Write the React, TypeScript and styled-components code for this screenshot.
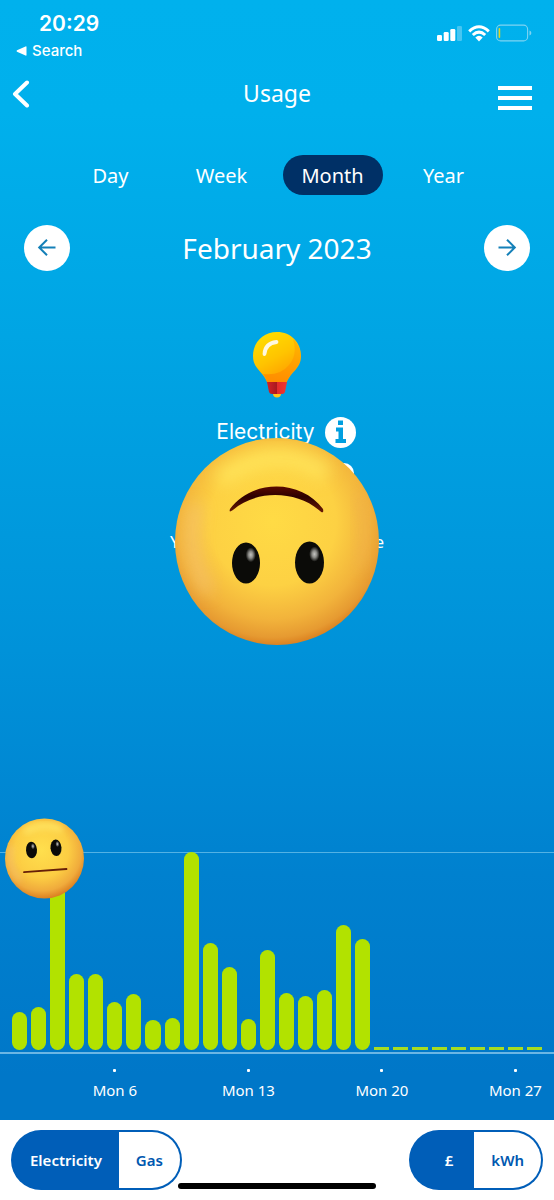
import React, { useState } from "react";
import styled, { createGlobalStyle } from "styled-components";

const GlobalStyle = createGlobalStyle`
  *, *::before, *::after { box-sizing: border-box; }
  body { margin: 0; font-family: "Noto Sans", sans-serif; color: #fff; }
  button { font: inherit; color: inherit; border: 0; padding: 0; background: none; cursor: pointer; }
  h1, h2, h3, p { margin: 0; font-weight: 400; }
  svg { display: block; }
`;

const Page = styled.div`
  min-height: 100vh;
  display: flex;
  flex-direction: column;
`;

const Screen = styled.main`
  flex: 1;
  display: flex;
  flex-direction: column;
  background: linear-gradient(180deg, #00b1ed 0%, #00b0ec 10%, #00a5e4 30%, #0092d9 58%, #0081cf 78%, #0077c8 96%, #0077c8 100%);
`;

const StatusBar = styled.div`
  display: flex;
  justify-content: space-between;
  height: 70px;
  padding: 12px 22px 0 16px;
  font-family: Inter, sans-serif;
`;

const StatusLeft = styled.div`
  display: flex;
  flex-direction: column;
  gap: 4px;
`;

const Clock = styled.time`
  padding-left: 23px;
  font-size: 21px;
  line-height: 24px;
  font-weight: 600;
`;

const BackTo = styled.a`
  display: flex;
  align-items: center;
  gap: 5px;
  color: inherit;
  text-decoration: none;
  font-size: 15px;
  line-height: 22px;
  font-weight: 500;
`;

const StatusIcons = styled.div`
  display: flex;
  align-items: center;
  gap: 6px;
  height: 42px;
`;

const Header = styled.header`
  display: flex;
  align-items: center;
  justify-content: space-between;
  height: 48px;
  padding: 0 22px 0 12px;
`;

const HeaderSide = styled.div<{ $end?: boolean }>`
  flex: 1;
  display: flex;
  justify-content: ${(p) => (p.$end ? "flex-end" : "flex-start")};
`;

const PageTitle = styled.h1`
  padding: 0 0 2px 10px;
  font-size: 23px;
  line-height: 32px;
`;

const MenuIcon = styled.span`
  display: flex;
  flex-direction: column;
  justify-content: space-between;
  width: 34px;
  height: 24px;
  margin-top: 7px;
  &::before, &::after { content: ""; }
  &::before, &::after, i { display: block; height: 4px; background: #fff; }
`;

const Periods = styled.nav`
  display: flex;
  padding: 37px 55px 0;
`;

const PeriodSlot = styled.div`
  flex: 1;
  display: flex;
  justify-content: center;
`;

const PeriodButton = styled.button<{ $active: boolean }>`
  width: 100px;
  height: 40px;
  border-radius: 20px;
  font-size: 20px;
  background: ${(p) => (p.$active ? "#003066" : "transparent")};
`;

const DateRow = styled.div`
  display: flex;
  align-items: center;
  justify-content: space-between;
  padding: 30px 24px 0;
`;

const DateTitle = styled.h2`
  font-size: 28px;
  line-height: 40px;
`;

const RoundButton = styled.button`
  display: grid;
  place-items: center;
  width: 46px;
  height: 46px;
  border-radius: 50%;
  background: #fff;
  color: #1480b8;
`;

const Summary = styled.section`
  position: relative;
  flex: 1;
  display: flex;
  flex-direction: column;
  align-items: center;
  min-height: 440px;
  padding-top: 61px;
`;

const Fuel = styled.div`
  display: flex;
  align-items: center;
  gap: 10px;
  margin: 18px 0 0 18px;
`;

const FuelName = styled.h3`
  font-family: Inter, sans-serif;
  font-size: 21px;
  line-height: 32px;
`;

const Amount = styled.div`
  width: 60px;
  height: 40px;
  margin: 15px 0 0 94px;
  border-radius: 10px;
  background: #fff;
`;

const Note = styled.p`
  display: flex;
  justify-content: space-between;
  width: 214px;
  margin-top: 27px;
  font-size: 17px;
  line-height: 24px;
`;

const BigFace = styled.div`
  position: absolute;
  top: 167px;
  left: 50%;
  transform: translateX(-50%);
`;

const Chart = styled.section`
  position: relative;
  display: grid;
  grid-template-columns: repeat(28, minmax(0, 1fr));
  grid-template-rows: minmax(0, 1fr);
  column-gap: 4px;
  align-items: end;
  height: 202px;
  padding: 0 12px 2px;
  border-top: 1px solid #53b2e4;
  border-bottom: 2px solid #6bb6e4;
`;

const Bar = styled.div<{ $empty: boolean }>`
  border-radius: ${(p) => (p.$empty ? "0" : "8px")};
  background: ${(p) => (p.$empty ? "#a6dc22" : "#b2e200")};
`;

const SmallFace = styled.div`
  position: absolute;
  top: -35px;
  left: 4px;
`;

const Axis = styled.div`
  display: grid;
  grid-template-columns: repeat(28, minmax(0, 1fr));
  column-gap: 4px;
  height: 66px;
  padding: 15px 12px 0;
`;

const Tick = styled.div<{ $day: number }>`
  grid-column: ${(p) => p.$day - 1} / span 3;
  grid-row: 1;
  display: flex;
  flex-direction: column;
  align-items: center;
  gap: 6px;
  font-size: 15px;
  line-height: 24px;
  white-space: nowrap;
  &::before { content: ""; width: 3px; height: 3px; border-radius: 1px; background: #fff; }
`;

const Footer = styled.footer`
  position: relative;
  display: flex;
  justify-content: space-between;
  height: 80px;
  padding: 10px 11px;
  background: #fff;
`;

const Toggle = styled.div`
  display: flex;
  height: 60px;
  border-radius: 30px;
  background: #005eb8;
  padding: 2px;
  overflow: hidden;
`;

const ToggleButton = styled.button<{ $active: boolean; $wide?: boolean }>`
  padding: ${(p) => (p.$wide ? "0 21px 0 34px" : "0 17px")};
  font-size: 15px;
  font-weight: 600;
  color: ${(p) => (p.$active ? "#fff" : "#0058b0")};
  background: ${(p) => (p.$active ? "#005eb8" : "#fff")};
  &:first-child { border-radius: 28px 0 0 28px; }
  &:last-child { border-radius: 0 28px 28px 0; }
`;

const HomeIndicator = styled.div`
  position: absolute;
  bottom: 11px;
  left: 50%;
  width: 198px;
  height: 6px;
  border-radius: 3px;
  background: #000;
  transform: translateX(-50%);
`;

const SignalIcon = () => (
  <svg width="25" height="16" viewBox="0 0 25 16" fill="#fff" aria-hidden="true">
    <rect x="0" y="10" width="5" height="6" rx="1.3" />
    <rect x="6.7" y="7" width="5" height="9" rx="1.3" />
    <rect x="13.3" y="4" width="5" height="12" rx="1.3" />
    <rect x="20" y="1" width="5" height="15" rx="1.3" opacity=".28" />
  </svg>
);

const WifiIcon = () => (
  <svg width="22" height="17" viewBox="0 0 22 17" fill="none" stroke="#fff" strokeWidth="3" aria-hidden="true">
    <path d="M1.2 6.3Q11-2.7 20.8 6.3" />
    <path d="M4.8 10Q11 4.2 17.2 10" />
    <path d="M7.3 12.6Q11 9 14.7 12.6L11 16.5Z" fill="#fff" stroke="none" />
  </svg>
);

const BatteryIcon = () => (
  <svg width="36" height="18" viewBox="0 0 36 18" fill="none" aria-hidden="true">
    <rect x=".6" y="1.1" width="31" height="15.8" rx="4" stroke="#7fd3f2" strokeWidth="1.1" />
    <rect x="2.6" y="4" width="1.6" height="10" rx=".8" fill="#e6d51f" />
    <path d="M33.5 6.5Q35.4 7.3 35.4 9T33.5 11.5Z" fill="#7fd3f2" />
  </svg>
);

const ArrowIcon = ({ right = false }: { right?: boolean }) => (
  <svg width="20" height="20" viewBox="0 0 20 20" fill="none" stroke="currentColor" strokeWidth="2" aria-hidden="true">
    {right ? <path d="M1.5 9.5H17.5M10 1.7L17.8 9.5L10 17.3" /> : <path d="M18.5 9.5H2.5M10 1.7L2.2 9.5L10 17.3" />}
  </svg>
);

const BulbIcon = () => (
  <svg width="48" height="66" viewBox="0 0 48 66" aria-hidden="true">
    <defs>
      <linearGradient id="bulb" x1=".2" y1="0" x2=".7" y2="1">
        <stop offset="0" stopColor="#ffdf00" />
        <stop offset=".5" stopColor="#ffc400" />
        <stop offset="1" stopColor="#ff9500" />
      </linearGradient>
      <linearGradient id="bulbShade" x1="1" y1="0" x2=".4" y2="1">
        <stop offset="0" stopColor="#ffb000" />
        <stop offset="1" stopColor="#ff8500" />
      </linearGradient>
      <linearGradient id="socket">
        <stop offset="0" stopColor="#d22228" />
        <stop offset=".49" stopColor="#a91820" />
        <stop offset=".5" stopColor="#e22a2b" />
        <stop offset="1" stopColor="#f03732" />
      </linearGradient>
    </defs>
    <circle cx="24" cy="61.5" r="4" fill="#ffc61a" />
    <path d="M24 0C10 0 0 10.500 0 24C0 37 10 39 14.500 51H33.500C38 39 48 37 48 24C48 10.500 38 0 24 0Z" fill="url(#bulb)" />
    <path d="M40 7C50 16 50 30 41 38C37 43 35 45 33.500 51H14.500Q13 46 10 42Q27 44 36 33Q45 22 40 7Z" fill="url(#bulbShade)" opacity=".7" />
    <path d="M11.500 22Q12 11.500 23.500 10" fill="none" stroke="#fff8e0" strokeWidth="3.800" strokeLinecap="round" />
    <path d="M14 50H34L32 60Q31.500 62 29 62H19Q16.500 62 16 60Z" fill="url(#socket)" />
  </svg>
);

const InfoIcon = () => (
  <svg width="31" height="31" viewBox="0 0 31 31" aria-hidden="true">
    <circle cx="15.500" cy="15.500" r="15.500" fill="#fff" />
    <path d="M13 3.500H18V8H13ZM11 10.500H18V22H21V26H10.500V22H13.500V14.500H11Z" fill="#009fe0" />
  </svg>
);

const UpsideDownFace = () => (
  <svg width="204" height="208" viewBox="0 0 204 208" role="img" aria-label="Upside-down face">
    <defs>
      <radialGradient id="bigBase" cx=".48" cy=".4" r=".62">
        <stop offset="0" stopColor="#ffdb45" />
        <stop offset=".5" stopColor="#fdd143" />
        <stop offset=".76" stopColor="#f2b33b" />
        <stop offset=".9" stopColor="#e69a31" />
        <stop offset="1" stopColor="#d57316" />
      </radialGradient>
      <radialGradient id="bigEye" cx=".67" cy=".3" r=".18">
        <stop offset="0" stopColor="#c4c4c0" />
        <stop offset=".45" stopColor="#8a8a86" />
        <stop offset="1" stopColor="#0b0b08" />
      </radialGradient>
      <linearGradient id="bigMouth" x1="0" y1="0" x2="0" y2="1">
        <stop offset="0" stopColor="#5a0a00" />
        <stop offset=".4" stopColor="#2c0000" />
        <stop offset="1" stopColor="#6a1a04" />
      </linearGradient>
      <filter id="glow" x="-80%" y="-80%" width="260%" height="260%"><feGaussianBlur stdDeviation="8" /></filter>
      <clipPath id="bigClip"><ellipse cx="102" cy="103.500" rx="102" ry="103.500" /></clipPath>
    </defs>
    <g clipPath="url(#bigClip)">
      <rect width="204" height="208" fill="url(#bigBase)" />
      <path d="M44 42Q102 2 152 36" fill="none" stroke="#ffe860" strokeWidth="20" opacity=".7" filter="url(#glow)" />
      <path d="M22 66Q8 112 34 154" fill="none" stroke="#f5c478" strokeWidth="12" opacity=".7" filter="url(#glow)" />
      <path d="M182 54Q196 90 184 128" fill="none" stroke="#f0b050" strokeWidth="14" opacity=".5" filter="url(#glow)" />
    </g>
    <path d="M55 71C77 41 126 41 148 71C149 75 147 75 145 73C121 52 80 52 58 72C55 74 54 74 55 71Z" fill="url(#bigMouth)" />
    <ellipse cx="71" cy="125" rx="14" ry="20.500" fill="url(#bigEye)" />
    <ellipse cx="134.500" cy="124.500" rx="14.500" ry="21" fill="url(#bigEye)" />
  </svg>
);

const NeutralFace = () => (
  <svg width="80" height="81" viewBox="0 0 80 81" role="img" aria-label="Neutral face">
    <defs>
      <radialGradient id="smallBase" cx=".47" cy=".4" r=".61">
        <stop offset="0" stopColor="#ffdf4d" />
        <stop offset=".55" stopColor="#fccd43" />
        <stop offset=".82" stopColor="#f0ab3c" />
        <stop offset="1" stopColor="#d8791d" />
      </radialGradient>
      <radialGradient id="smallEye" cx=".65" cy=".28" r=".18">
        <stop offset="0" stopColor="#ccc" />
        <stop offset="1" stopColor="#0b0b08" />
      </radialGradient>
      <filter id="softGlow" x="-80%" y="-80%" width="260%" height="260%"><feGaussianBlur stdDeviation="3" /></filter>
      <clipPath id="smallClip"><ellipse cx="40.500" cy="40.500" rx="39.500" ry="40" /></clipPath>
    </defs>
    <g clipPath="url(#smallClip)">
      <rect width="80" height="81" fill="url(#smallBase)" />
      <path d="M20 14Q40 3 58 12" fill="none" stroke="#ffe96a" strokeWidth="7" opacity=".75" filter="url(#softGlow)" />
      <path d="M8 28Q3 48 16 62" fill="none" stroke="#f6c77a" strokeWidth="4" opacity=".7" filter="url(#softGlow)" />
    </g>
    <ellipse cx="27.500" cy="32" rx="5.500" ry="8.300" fill="url(#smallEye)" transform="rotate(-4 27.500 32)" />
    <ellipse cx="52" cy="29.800" rx="5.500" ry="8.300" fill="url(#smallEye)" transform="rotate(-4 52 29.800)" />
    <path d="M20 54.200L62.500 51" stroke="#672008" strokeWidth="1.800" strokeLinecap="round" />
  </svg>
);

const periods = ["Day", "Week", "Month", "Year"];
const usage = [38, 43, 180, 76, 76, 48, 56, 30, 32, 198, 107, 83, 31, 100, 57, 54, 60, 125, 111, 0, 0, 0, 0, 0, 0, 0, 0, 0];
const mondays = [6, 13, 20, 27];

export default function App() {
  const [period, setPeriod] = useState("Month");
  const [fuel, setFuel] = useState("Electricity");
  const [unit, setUnit] = useState("£");

  return (
    <Page>
      <GlobalStyle />
      <Screen>
        <StatusBar>
          <StatusLeft>
            <Clock>20:29</Clock>
            <BackTo href="#search">
              <svg width="11" height="10" viewBox="0 0 11 10" fill="#fff" aria-hidden="true"><path d="M1 4.300L9.500.4Q10.500 0 10.500 1V9Q10.500 10 9.500 9.600L1 5.700Q0 5 1 4.300Z" /></svg>
              Search
            </BackTo>
          </StatusLeft>
          <StatusIcons>
            <SignalIcon />
            <WifiIcon />
            <BatteryIcon />
          </StatusIcons>
        </StatusBar>

        <Header>
          <HeaderSide>
            <button aria-label="Back">
              <svg width="18" height="28" viewBox="0 0 18 28" fill="none" stroke="#fff" strokeWidth="4" strokeLinecap="round" strokeLinejoin="round"><path d="M15 2.500L3 14L15 25.500" /></svg>
            </button>
          </HeaderSide>
          <PageTitle>Usage</PageTitle>
          <HeaderSide $end>
            <button aria-label="Menu"><MenuIcon><i /></MenuIcon></button>
          </HeaderSide>
        </Header>

        <Periods aria-label="Period">
          {periods.map((name) => (
            <PeriodSlot key={name}>
              <PeriodButton $active={name === period} aria-pressed={name === period} onClick={() => setPeriod(name)}>{name}</PeriodButton>
            </PeriodSlot>
          ))}
        </Periods>

        <DateRow>
          <RoundButton aria-label="Previous month"><ArrowIcon /></RoundButton>
          <DateTitle>February 2023</DateTitle>
          <RoundButton aria-label="Next month"><ArrowIcon right /></RoundButton>
        </DateRow>

        <Summary>
          <BulbIcon />
          <Fuel>
            <FuelName>Electricity</FuelName>
            <button aria-label="About electricity usage"><InfoIcon /></button>
          </Fuel>
          <Amount />
          <Note><span>Y</span><span>e</span></Note>
          <BigFace><UpsideDownFace /></BigFace>
        </Summary>

        <Chart aria-label="Daily usage">
          {usage.map((value, index) => (
            <Bar key={index} $empty={value === 0} style={{ height: Math.max(value, 3) }} />
          ))}
          <SmallFace><NeutralFace /></SmallFace>
        </Chart>
        <Axis>
          {mondays.map((day) => <Tick key={day} $day={day}>Mon {day}</Tick>)}
        </Axis>
      </Screen>

      <Footer>
        <Toggle role="group" aria-label="Fuel">
          <ToggleButton $active={fuel === "Electricity"} aria-pressed={fuel === "Electricity"} onClick={() => setFuel("Electricity")}>Electricity</ToggleButton>
          <ToggleButton $active={fuel === "Gas"} aria-pressed={fuel === "Gas"} onClick={() => setFuel("Gas")}>Gas</ToggleButton>
        </Toggle>
        <Toggle role="group" aria-label="Unit">
          <ToggleButton $wide $active={unit === "£"} aria-pressed={unit === "£"} onClick={() => setUnit("£")}>£</ToggleButton>
          <ToggleButton $active={unit === "kWh"} aria-pressed={unit === "kWh"} onClick={() => setUnit("kWh")}>kWh</ToggleButton>
        </Toggle>
        <HomeIndicator />
      </Footer>
    </Page>
  );
}
